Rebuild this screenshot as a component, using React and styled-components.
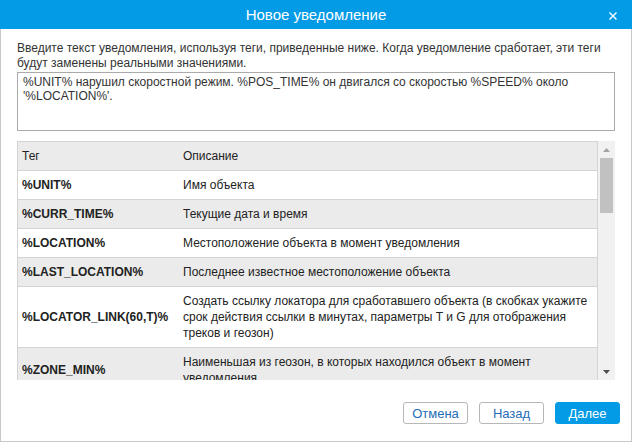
import React from 'react';
import styled, { createGlobalStyle } from 'styled-components';

const GlobalStyle = createGlobalStyle`
  body {
    margin: 0;
    font-family: "Liberation Sans", Arial, sans-serif;
    background: #fff;
  }
`;

const Dialog = styled.div`
  width: 632px;
  height: 442px;
  display: flex;
  flex-direction: column;
  box-sizing: border-box;
`;

const Header = styled.div`
  position: relative;
  height: 29px;
  flex: none;
  background: #039be5;
  color: #fff;
  display: flex;
  align-items: center;
  justify-content: center;
  font-size: 15px;
`;

const CloseButton = styled.button`
  position: absolute;
  right: 14px;
  top: 11px;
  width: 10px;
  height: 10px;
  padding: 0;
  border: none;
  background: none;
  display: flex;
  cursor: pointer;
`;

const Body = styled.div`
  flex: 1;
  display: flex;
  flex-direction: column;
  border: 1px solid #c9c9c9;
  border-top: none;
`;

const Content = styled.div`
  padding: 12px 16px 0;
`;

const Intro = styled.p`
  margin: 0;
  font-size: 12px;
  line-height: 15px;
  color: #333;
`;

const MessageInput = styled.textarea`
  display: block;
  width: 100%;
  height: 59px;
  margin-top: 1px;
  box-sizing: border-box;
  border: 1px solid #aaa;
  padding: 2px 5px;
  font-family: "Liberation Sans", Arial, sans-serif;
  font-size: 12px;
  line-height: 14px;
  color: #333;
  resize: none;
  outline: none;
`;

const TableArea = styled.div`
  margin-top: 10px;
  height: 239px;
  display: flex;
`;

const TableViewport = styled.div`
  flex: 1;
  min-width: 0;
  overflow: hidden;
`;

const ScrollBar = styled.div`
  width: 17px;
  flex: none;
  display: flex;
  flex-direction: column;
  background: #f1f1f1;
`;

const ScrollButton = styled.div`
  height: 17px;
  flex: none;
  display: flex;
  align-items: center;
  justify-content: center;
`;

const ScrollTrack = styled.div`
  flex: 1;
  padding: 0 2px;
`;

const ScrollThumb = styled.div`
  height: 55px;
  background: #c1c1c1;
`;

const Table = styled.div`
  border: 1px solid #d4d4d4;
  border-bottom: none;
`;

const Row = styled.div`
  display: grid;
  grid-template-columns: 161px 1fr;
  align-items: center;
  background: ${(p) => (p.$alt ? '#ebebeb' : '#fff')};
  border-bottom: 1px solid #d4d4d4;
  font-size: 12px;
  line-height: 16px;
  color: #222;
`;

const Cell = styled.div`
  padding: 6px 4px;
  font-weight: ${(p) => (p.$bold ? 'bold' : 'normal')};
`;

const Footer = styled.div`
  display: flex;
  justify-content: flex-end;
  gap: 11px;
  padding: 22px 11px 0;
`;

const Button = styled.button`
  width: 65px;
  height: 22px;
  box-sizing: border-box;
  border-radius: 3px;
  border: 1px solid ${(p) => (p.$primary ? '#039be5' : '#b7b7b7')};
  background: ${(p) => (p.$primary ? '#039be5' : '#fff')};
  color: ${(p) => (p.$primary ? '#fff' : '#1f6db8')};
  font-family: "Liberation Sans", Arial, sans-serif;
  font-size: 13px;
  padding: 0;
  cursor: pointer;
`;

const tags = [
  ['%UNIT%', 'Имя объекта'],
  ['%CURR_TIME%', 'Текущие дата и время'],
  ['%LOCATION%', 'Местоположение объекта в момент уведомления'],
  ['%LAST_LOCATION%', 'Последнее известное местоположение объекта'],
  ['%LOCATOR_LINK(60,T)%', 'Создать ссылку локатора для сработавшего объекта (в скобках укажите срок действия ссылки в минутах, параметры T и G для отображения треков и геозон)'],
  ['%ZONE_MIN%', 'Наименьшая из геозон, в которых находился объект в момент уведомления'],
  ['%ZONES_ALL%', 'Все геозоны, в которых находился объект в момент уведомления'],
  ['%UNIT_GROUP%', 'Группы, в которые входит объект'],
  ['%SPEED%', 'Скорость объекта в момент уведомления'],
  ['%POS_TIME%', 'Дата и время последнего сообщения с позицией'],
  ['%MSG_TIME%', 'Дата и время сообщения, вызвавшего уведомление'],
  ['%DRIVER%', 'Имя водителя'],
  ['%TRAILER%', 'Имя прицепа'],
  ['%SENSOR(*)%', 'Датчики объекта и их значения (в скобках укажите маску имени датчика)'],
  ['%ENGINE_HOURS%', 'Моточасы в момент уведомления'],
  ['%MILEAGE%', 'Пробег в момент уведомления'],
  ['%LAT%', 'Широта в момент уведомления'],
  ['%LON%', 'Долгота в момент уведомления'],
  ['%GOOGLE_LINK%', 'Ссылка на Google Maps с местоположением объекта'],
  ['%NOTIFICATION%', 'Имя уведомления'],
  ['%SERVER_TIME%', 'Дата и время сервера'],
];

const Arrow = ({ down, color }) => (
  <svg width="7" height="4" viewBox="0 0 7 4">
    <path d={down ? 'M0 0 H7 L3.5 4 Z' : 'M0 4 H7 L3.5 0 Z'} fill={color} />
  </svg>
);

const App = () => (
  <>
    <GlobalStyle />
    <Dialog>
      <Header>
        Новое уведомление
        <CloseButton aria-label="Закрыть">
          <svg width="10" height="10" viewBox="0 0 10 10">
            <path d="M1.5 1.5 L8.5 8.5 M8.5 1.5 L1.5 8.5" stroke="#fff" strokeWidth="1.4" />
          </svg>
        </CloseButton>
      </Header>
      <Body>
        <Content>
          <Intro>
            Введите текст уведомления, используя теги, приведенные ниже. Когда уведомление сработает, эти теги будут
            заменены реальными значениями.
          </Intro>
          <MessageInput
            defaultValue="%UNIT% нарушил скоростной режим. %POS_TIME% он двигался со скоростью %SPEED% около '%LOCATION%'."
          />
          <TableArea>
            <TableViewport>
              <Table>
                <Row $alt>
                  <Cell>Тег</Cell>
                  <Cell>Описание</Cell>
                </Row>
                {tags.map(([tag, desc], i) => (
                  <Row key={tag} $alt={i % 2 === 1}>
                    <Cell $bold>{tag}</Cell>
                    <Cell>{desc}</Cell>
                  </Row>
                ))}
              </Table>
            </TableViewport>
            <ScrollBar>
              <ScrollButton>
                <Arrow color="#a3a3a3" />
              </ScrollButton>
              <ScrollTrack>
                <ScrollThumb />
              </ScrollTrack>
              <ScrollButton>
                <Arrow down color="#505050" />
              </ScrollButton>
            </ScrollBar>
          </TableArea>
        </Content>
        <Footer>
          <Button>Отмена</Button>
          <Button>Назад</Button>
          <Button $primary>Далее</Button>
        </Footer>
      </Body>
    </Dialog>
  </>
);

export default App;
